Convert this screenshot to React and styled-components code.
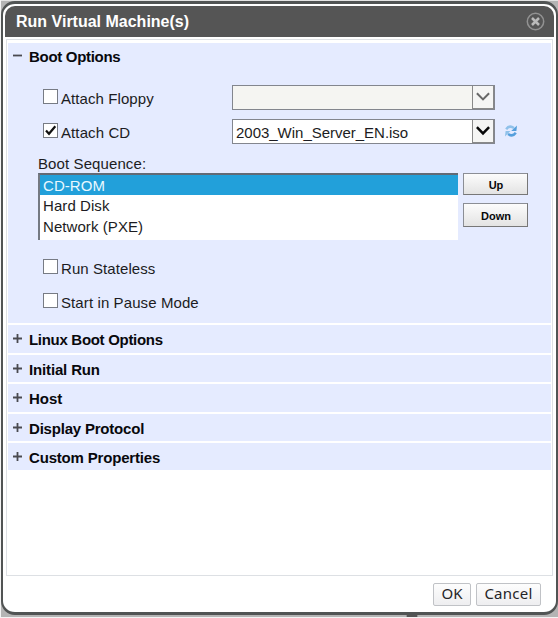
import React from "react";
import styled, { createGlobalStyle } from "styled-components";

const GlobalStyle = createGlobalStyle`
  * { box-sizing: border-box; }
  body {
    margin: 0;
    background: #b4b4b4;
    font-family: "Liberation Sans", Arial, sans-serif;
    color: #1c1c22;
    overflow: hidden;
  }
`;

const Page = styled.div`
  width: 558px;
  height: 618px;
  padding: 1px 0 2px;
  border-left: 1px solid #f4f4f4;
  border-bottom: 1px solid #f4f4f4;
  background:
    radial-gradient(ellipse 6px 3px at 411px 616px, #555 80%, transparent),
    linear-gradient(#e4e4e4 0 1px, #b4b4b4 1px);
`;

const Dialog = styled.div`
  width: 557px;
  height: 614px;
  display: flex;
  flex-direction: column;
  padding: 2px;
  background: #fff;
  border: 2px solid #515454;
  border-top-width: 3px;
  border-bottom-width: 3px;
  border-radius: 14px;
`;

const TitleBar = styled.header`
  flex: none;
  height: 31px;
  display: flex;
  align-items: center;
  justify-content: space-between;
  padding: 0 9px 0 11px;
  background: #555;
  border-radius: 10px 10px 0 0;
`;

const Title = styled.h1`
  margin: 0;
  font-size: 16px;
  line-height: 18px;
  color: #fff;
`;

const CloseButton = styled.button`
  display: flex;
  width: 19px;
  height: 19px;
  padding: 0;
  border: 0;
  background: none;
`;

const Body = styled.main`
  flex: none;
  height: 537px;
  margin: 2px 1px 0;
  padding: 3px 1px 0;
  border: 1px solid #dde0e4;
  display: flex;
  flex-direction: column;
  gap: 2px;
  background: #fff;
`;

const Section = styled.section`
  flex: none;
  height: ${(p) => p.$height}px;
  background: #e5ebff;
`;

const SectionHeader = styled.div`
  display: flex;
  align-items: center;
  height: 28px;
  padding-left: 5px;
  gap: 7px;
`;

const SectionTitle = styled.h2`
  margin: 0;
  padding-top: ${(p) => (p.$open ? 0 : 2)}px;
  font-size: 15px;
  line-height: 18px;
  letter-spacing: ${(p) => p.$spacing || 0}px;
  color: #08080c;
`;

const ToggleIcon = styled.svg`
  width: 9px;
  height: 9px;
  margin-top: ${(p) => (p.$open ? -3 : -1)}px;
  stroke: #4a4a50;
  stroke-width: 1.8;
`;

const Options = styled.div`
  padding: 14px 0 0 30px;
`;

const FieldRow = styled.div`
  display: flex;
  align-items: center;
  height: 25px;
  margin-bottom: ${(p) => p.$after || 0}px;
`;

const CheckLabel = styled.label`
  display: flex;
  align-items: center;
  width: 190px;
  padding-left: 5px;
  font-size: 15px;
  line-height: 18px;
  letter-spacing: ${(p) => p.$spacing || 0}px;
`;

const CheckBox = styled.span`
  display: flex;
  width: 15px;
  height: 15px;
  margin: -3px 3px 0 0;
  border: 1px solid #777b84;
  background: #fff;
`;

const LabelText = styled.span`
  padding-top: 2px;
  white-space: nowrap;
`;

const Select = styled.div`
  display: flex;
  width: 263px;
  height: 25px;
  border: 1px solid #83868e;
  background: ${(p) => (p.$disabled ? "#f5f5f2" : "#fff")};
  margin-left: 4px;
`;

const SelectValue = styled.span`
  flex: 1;
  padding: 4px 0 0 3px;
  font-size: 15px;
  line-height: 18px;
  letter-spacing: -0.02px;
`;

const SelectArrow = styled.span`
  width: 22px;
  display: flex;
  justify-content: center;
  padding-top: 6px;
  background: #f5f5f4;
  border: 1px solid #898989;
  border-width: 0 1px 1px;
`;

const RefreshIcon = styled.svg`
  width: 14px;
  height: 14px;
  margin: -2px 0 0 9px;
`;

const SequenceLabel = styled.div`
  font-size: 15px;
  line-height: 18px;
  height: 18px;
  letter-spacing: 0.1px;
`;

const Sequence = styled.div`
  display: flex;
  align-items: flex-start;
  gap: 5px;
  margin-bottom: 15px;
`;

const ListBox = styled.div`
  width: 420px;
  height: 67px;
  border-top: 2px solid #626a75;
  border-left: 2px solid #747982;
  background: #fff;
`;

const ListItem = styled.div`
  height: ${(p) => (p.$selected ? 20 : 21)}px;
  padding: 0 0 0 3px;
  font-size: 15px;
  line-height: ${(p) => (p.$selected ? 21 : 22)}px;
  letter-spacing: 0.07px;
  color: ${(p) => (p.$selected ? "#e9f8ff" : "#1c1c22")};
  background: ${(p) => (p.$selected ? "#22a0da" : "transparent")};
`;

const MoveButtons = styled.div`
  display: flex;
  flex-direction: column;
  gap: 8px;
`;

const MoveButton = styled.button`
  width: 65px;
  height: ${(p) => p.$height}px;
  padding: 1px 0 0 1px;
  border: 1px solid #8b8e95;
  border-right-color: #777;
  border-bottom-color: #777;
  background: linear-gradient(#fcfcfc, #e3e3e3);
  color: #08080a;
  font: bold 11px "Liberation Sans", Arial, sans-serif;
`;

const Footer = styled.footer`
  display: flex;
  justify-content: flex-end;
  gap: 5px;
  padding: 7px 13px 0 0;
`;

const FooterButton = styled.button`
  width: ${(p) => p.$width}px;
  height: 23px;
  padding: 0 0 3px;
  border: 1px solid #c0c2c6;
  border-radius: 2px;
  background: linear-gradient(#fdfdfd, #eeeef0);
  color: #252528;
  font: 15px/18px "Noto Sans", sans-serif;
  letter-spacing: ${(p) => p.$spacing || 0}px;
`;

function Toggle({ open }) {
  return (
    <ToggleIcon $open={open} viewBox="0 0 9 9">
      <path d={open ? "M0 4.5H9" : "M0 4.5H9M4.5 0V9"} />
    </ToggleIcon>
  );
}

function Header({ title, open, spacing }) {
  return (
    <SectionHeader>
      <Toggle open={open} />
      <SectionTitle $open={open} $spacing={spacing}>{title}</SectionTitle>
    </SectionHeader>
  );
}

function Check({ label, checked, spacing }) {
  return (
    <CheckLabel $spacing={spacing}>
      <CheckBox>
        {checked && (
          <svg width="13" height="13" viewBox="0 0 13 13" fill="none">
            <path d="M2 6.5L5 9.8L11.3 2.3" stroke="#111" strokeWidth="2.2" />
          </svg>
        )}
      </CheckBox>
      <LabelText>{label}</LabelText>
    </CheckLabel>
  );
}

function Dropdown({ value, disabled }) {
  return (
    <Select $disabled={disabled}>
      <SelectValue>{value}</SelectValue>
      <SelectArrow>
        <svg width="14" height="10" viewBox="0 0 14 10" fill="none">
          <path
            d="M0.9 1.2L7 7.4L13.1 1.2"
            stroke={disabled ? "#686868" : "#080808"}
            strokeWidth={disabled ? 2 : 2.5}
          />
        </svg>
      </SelectArrow>
    </Select>
  );
}

const collapsedSections = [
  { title: "Linux Boot Options", height: 28, spacing: -0.3 },
  { title: "Initial Run", height: 27, spacing: -0.15 },
  { title: "Host", height: 28, spacing: 0 },
  { title: "Display Protocol", height: 27, spacing: -0.2 },
  { title: "Custom Properties", height: 27, spacing: -0.18 },
];

export default function App() {
  return (
    <>
      <GlobalStyle />
      <Page>
        <Dialog>
          <TitleBar>
            <Title>Run Virtual Machine(s)</Title>
            <CloseButton aria-label="Close">
              <svg width="19" height="19" viewBox="0 0 19 19" fill="none">
                <circle cx="9.5" cy="9.5" r="8.2" stroke="#929292" strokeWidth="1.5" />
                <path d="M6 6L13 13M13 6L6 13" stroke="#bababa" strokeWidth="2.5" />
              </svg>
            </CloseButton>
          </TitleBar>
          <Body>
            <Section $height={280}>
              <Header title="Boot Options" open spacing={-0.3} />
              <Options>
                <FieldRow $after={9}>
                  <Check label="Attach Floppy" spacing={0.08} />
                  <Dropdown disabled />
                </FieldRow>
                <FieldRow $after={11}>
                  <Check label="Attach CD" checked spacing={0.1} />
                  <Dropdown value="2003_Win_Server_EN.iso" />
                  <RefreshIcon viewBox="0 0 14 14" fill="none">
                    <path d="M2.2 5.2C4 2.6 7 2 10 4" stroke="#8fc1ea" strokeWidth="2.5" />
                    <path d="M13 1.5L12.4 7H7.2Z" fill="#559fdc" />
                    <path d="M11.8 8.8C10 11.4 7 12 4 10" stroke="#559fdc" strokeWidth="2.5" />
                    <path d="M1 12.5L1.6 7H6.5Z" fill="#8fc1ea" />
                  </RefreshIcon>
                </FieldRow>
                <SequenceLabel>Boot Sequence:</SequenceLabel>
                <Sequence>
                  <ListBox>
                    <ListItem $selected>CD-ROM</ListItem>
                    <ListItem>Hard Disk</ListItem>
                    <ListItem>Network (PXE)</ListItem>
                  </ListBox>
                  <MoveButtons>
                    <MoveButton $height={22}>Up</MoveButton>
                    <MoveButton $height={24}>Down</MoveButton>
                  </MoveButtons>
                </Sequence>
                <FieldRow $after={9}>
                  <Check label="Run Stateless" spacing={0.08} />
                </FieldRow>
                <FieldRow>
                  <Check label="Start in Pause Mode" spacing={0.1} />
                </FieldRow>
              </Options>
            </Section>
            {collapsedSections.map((s) => (
              <Section key={s.title} $height={s.height}>
                <Header title={s.title} spacing={s.spacing} />
              </Section>
            ))}
          </Body>
          <Footer>
            <FooterButton $width={38}>OK</FooterButton>
            <FooterButton $width={65} $spacing={0.25}>Cancel</FooterButton>
          </Footer>
        </Dialog>
      </Page>
    </>
  );
}
